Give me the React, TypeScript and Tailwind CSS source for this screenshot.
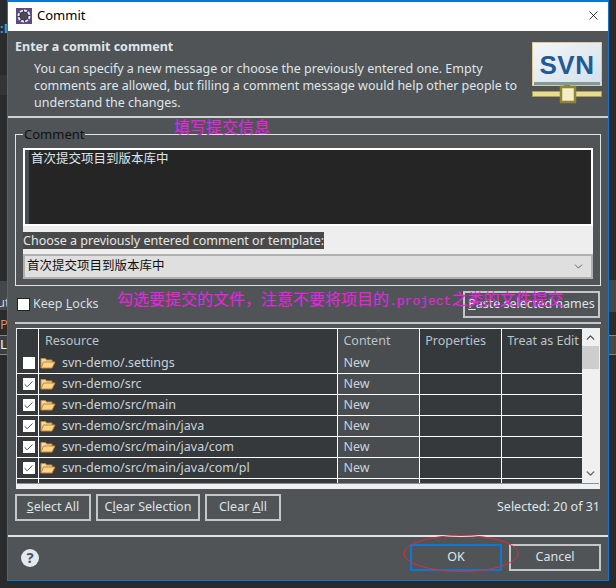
import { Check, ChevronDown, ChevronUp, X } from "lucide-react";

const rows = [
  { path: "svn-demo/.settings", checked: false },
  { path: "svn-demo/src", checked: true },
  { path: "svn-demo/src/main", checked: true },
  { path: "svn-demo/src/main/java", checked: true },
  { path: "svn-demo/src/main/java/com", checked: true },
  { path: "svn-demo/src/main/java/com/pl", checked: true },
];

const font = "font-['Noto_Sans','Noto_Sans_CJK_SC',sans-serif]";

function FolderIcon() {
  return (
    <svg width="16" height="14" viewBox="0 0 16 14" className="shrink-0">
      <path d="M1 12V2.5h4.5l1 1.5H12v2" fill="#f3d9a4" stroke="#c08a3e" />
      <path d="M1 12l2.5-6H15l-3 6z" fill="#fbd58e" stroke="#c9842c" />
    </svg>
  );
}

function Checkbox({ checked }: { checked: boolean }) {
  return (
    <span className="flex h-[12px] w-[12px] shrink-0 items-center justify-center bg-white">
      {checked && <Check size={11} strokeWidth={2} className="text-[#444]" />}
    </span>
  );
}

function ActionButton({ children, className = "" }: { children: React.ReactNode; className?: string }) {
  return (
    <button className={`flex h-[27px] items-center justify-center border-2 border-[#c4c6c7] bg-[#505457] text-[12.5px] text-[#dce3e8] ${className}`}>
      {children}
    </button>
  );
}

function Row({ path, checked }: { path: string; checked: boolean }) {
  return (
    <div className="flex h-[21px] border-b border-white bg-[#36393c] text-[12.5px] text-[#c8d3da]">
      <div className="flex w-[21px] items-center justify-end pr-[3px]">
        <Checkbox checked={checked} />
      </div>
      <div className="flex w-[300px] items-center border-l border-white pl-[1px]">
        <FolderIcon />
        <span className="ml-[6px] pt-[1px] leading-none">{path}</span>
      </div>
      <div className="flex w-[82px] items-center border-l border-white bg-[#494d50] pl-[5px] pt-[1px]">New</div>
      <div className="w-[82px] border-l border-white" />
      <div className="w-[81px] border-l border-white" />
    </div>
  );
}

export default function App() {
  return (
    <div className={`relative flex h-[588px] w-[616px] overflow-hidden bg-[#2a2b2c] ${font}`}>
      {/* bits of the IDE behind the dialog */}
      <div className="relative w-[7px] shrink-0 overflow-hidden">
        <span className="absolute left-0 top-[18px] text-[13px] font-bold leading-[20px] text-[#2f9fd8]">:D</span>
        <div className="absolute left-0 top-[75px] h-[20px] w-[7px] bg-[#333537]" />
        <div className="absolute left-0 top-[281px] h-[29px] w-[7px] bg-[#45484a]" />
        <div className="absolute left-0 top-[335px] h-[20px] w-[7px] border-y border-[#8a8670] bg-[#3c3f41]" />
        <span className="absolute left-[-3px] top-[293px] text-[13px] leading-[18px] text-[#c8d3da]">ut</span>
        <span className="absolute left-0 top-[315px] text-[13px] leading-[18px] text-[#d9905a]">P</span>
        <span className="absolute left-0 top-[336px] text-[13px] leading-[17px] text-white">L</span>
      </div>

      <div className="flex h-[581px] w-[602px] shrink-0 flex-col border border-t-2 border-[#0a78d0] bg-[#505457]">
        <div className="flex h-[29px] shrink-0 items-center justify-between bg-white px-[8px] pb-[2px]">
          <div className="flex items-center gap-[5px]">
            <svg width="16" height="16" viewBox="0 0 16 16">
              <rect width="16" height="16" fill="#5d4a86" />
              <circle cx="8" cy="8" r="5.5" fill="#34343f" stroke="#e8e8e8" strokeWidth="2" strokeDasharray="3 1.2" />
              <circle cx="8" cy="8" r="3.5" fill="#4a4a5c" />
            </svg>
            <span className="text-[13px] text-black">Commit</span>
          </div>
          <X size={15} strokeWidth={1.25} className="mr-[-1px] text-black" />
        </div>

        <div className="flex h-[87px] shrink-0 justify-between border-b-2 border-[#d0d2d3] pl-[7px] pr-[6px] pt-[7px]">
          <div className="text-[#dfe6ea]">
            <div className="text-[12.5px] font-bold leading-[18px]">Enter a commit comment</div>
            <p className="ml-[19px] mt-[4px] w-[486px] text-[12.5px] leading-[17px]">
              You can specify a new message or choose the previously entered one. Empty comments are allowed, but filling a comment message would help other people to understand the changes.
            </p>
          </div>
          <svg width="70" height="62" viewBox="0 0 70 62" className="mt-[4px] shrink-0">
            <defs>
              <linearGradient id="svnBg" x1="0" y1="0" x2="1" y2="1">
                <stop offset="0" stopColor="#f3f6f8" />
                <stop offset="1" stopColor="#d2e0ea" />
              </linearGradient>
            </defs>
            <rect x="0.5" y="0.5" width="69" height="43" fill="url(#svnBg)" stroke="#e3c796" />
            <rect x="2" y="40" width="66" height="3" fill="#7d9a9c" />
            <text x="35" y="32" textAnchor="middle" fontFamily="Liberation Sans" fontWeight="700" fontSize="26" letterSpacing="0.5" fill="#225a96">SVN</text>
            <rect x="32" y="43" width="6" height="4" fill="#8c8440" />
            <rect x="0.5" y="49.5" width="69" height="5" fill="#e8dc8e" stroke="#a89f55" strokeWidth="1" />
            <rect x="29" y="45" width="14" height="15" fill="#f6ecc4" stroke="#8d8438" strokeWidth="2.5" />
          </svg>
        </div>

        <div className="relative mx-[7px] mt-[16px] h-[152px] shrink-0 border border-[#e0e2e3] px-[7px] pt-[13px]">
          <span className="absolute left-[7px] top-[-9px] bg-[#505457] px-[1px] text-[13px] leading-[16px] text-[#111]">Comment</span>
          <div className="flex h-[78px] border-2 border-white bg-[#252525] text-[12.5px] leading-[18px] text-[#dfe6ea]">
            <div className="h-full w-[4px] bg-[#4a4d50]" />
            <span className="pl-[2px]">首次提交项目到版本库中</span>
          </div>
          <div className="flex h-[28px] items-center bg-[#eeeeee] text-[12.5px]">
            <span className="bg-[#494949] leading-[17px] text-[#e6e6e6]">Choose a previously entered comment or template:</span>
          </div>
          <div className="flex h-[25px] items-center justify-between border-2 border-[#b0b0b0] bg-[#dfdfdf] pl-[2px] pr-[6px] text-[12.5px] text-[#111]">
            <span>首次提交项目到版本库中</span>
            <ChevronDown size={13} strokeWidth={1.5} className="text-[#444]" />
          </div>
        </div>

        <div className="flex h-[32px] shrink-0 items-end justify-between pl-[9px] pr-[8px]">
          <div className="mb-[4px] flex items-center gap-[3px] text-[12.5px] text-[#d5dfe6]">
            <span className="h-[13px] w-[13px] border border-[#222] bg-white" />
            <span>
              Keep <span className="underline">L</span>ocks
            </span>
          </div>
          <ActionButton className="w-[137px]">
            <span>
              <span className="underline">P</span>aste selected names
            </span>
          </ActionButton>
        </div>

        <div className="mx-[7px] mt-[4px] h-[2px] shrink-0 bg-[#c4c6c7]" />

        <div className="mx-[8px] mt-[4px] flex h-[161px] shrink-0 flex-col border-x border-[#f0f0f0]">
          <div className="flex min-h-0 flex-1">
            <div className="min-w-0 flex-1 overflow-hidden border-t border-white bg-[#36393c]">
              <div className="flex h-[24px] text-[12.5px] text-[#b9c4cb]">
                <div className="w-[21px]" />
                <div className="flex w-[300px] items-center border-l border-white pl-[6px]">Resource</div>
                <div className="relative flex w-[82px] items-center border-l border-white bg-[#494d50] pl-[5px]">
                  Content
                  <ChevronUp size={11} strokeWidth={1} className="absolute left-[35px] top-[-3px] text-[#6f7376]" />
                </div>
                <div className="flex w-[82px] items-center border-l border-white pl-[5px]">Properties</div>
                <div className="flex w-[81px] items-center overflow-hidden whitespace-nowrap border-l border-white pl-[5px]">Treat as Edit</div>
              </div>
              {rows.map((row) => (
                <Row key={row.path} {...row} />
              ))}
              <div className="flex h-[4px]">
                <div className="w-[21px]" />
                <div className="w-[300px] border-l border-white" />
                <div className="w-[82px] border-l border-white bg-[#494d50]" />
                <div className="w-[82px] border-l border-white" />
                <div className="w-[81px] border-l border-white" />
              </div>
            </div>
            <div className="flex w-[17px] shrink-0 flex-col items-center justify-between bg-[#f0f0f0] py-[3px]">
              <div className="flex w-full flex-col items-center">
                <ChevronUp size={13} strokeWidth={2.5} className="text-[#505050]" />
                <div className="mt-[2px] h-[23px] w-full bg-[#cdcdcd]" />
              </div>
              <ChevronDown size={13} strokeWidth={2.5} className="text-[#606060]" />
            </div>
          </div>
          <div className="h-[6px] shrink-0 border-t border-[#8b8e90] bg-[#f0f0f0]" />
        </div>

        <div className="mx-[7px] mt-[5px] flex h-[27px] shrink-0 items-center justify-between pr-[1px]">
          <div className="flex gap-[5px]">
            <ActionButton className="w-[76px]">
              <span>
                <span className="underline">S</span>elect All
              </span>
            </ActionButton>
            <ActionButton className="w-[104px]">
              <span>
                C<span className="underline">l</span>ear Selection
              </span>
            </ActionButton>
            <ActionButton className="w-[76px]">
              <span>
                Clear <span className="underline">A</span>ll
              </span>
            </ActionButton>
          </div>
          <span className="text-[12.5px] text-[#dfe6ea]">Selected: 20 of 31</span>
        </div>

        <div className="mt-[14px] h-[2px] shrink-0 bg-[#e3e4e5]" />

        <div className="flex flex-1 items-center justify-between pb-[2px] pl-[13px] pr-[7px]">
          <span className="flex h-[18px] w-[18px] items-center justify-center rounded-full bg-[#e4e9ef] text-[15px] font-bold leading-none text-[#47556b]">?</span>
          <div className="flex gap-[7px]">
            <button className="h-[27px] w-[92px] border-2 border-[#0a78d7] bg-[#505457] text-[12.5px] text-[#dfe6ea]">OK</button>
            <ActionButton className="w-[92px]">Cancel</ActionButton>
          </div>
        </div>
      </div>

      {/* strip of the IDE on the right */}
      <div className="relative flex-1">
        <div className="absolute inset-x-0 top-[280px] h-[32px] bg-[#45484a]" />
        <div className="absolute inset-x-0 top-[335px] h-[20px] border-y border-[#8a8670] bg-[#4a4844]" />
      </div>

      {/* hand-written annotations on top of the screenshot */}
      <span className="absolute left-[174px] top-[116px] font-['Noto_Sans_CJK_SC',sans-serif] text-[16px] leading-[20px] text-[#f01ee6]">填写提交信息</span>
      <span className="absolute left-[117px] top-[288px] whitespace-nowrap font-['Noto_Sans_CJK_SC',sans-serif] text-[16px] leading-[20px] text-[#f01ee6]">
        勾选要提交的文件，注意不要将项目的<span className="font-['Liberation_Mono',monospace] text-[13px]">.project</span>之类的文件提交
      </span>
      <svg width="116" height="40" viewBox="0 0 116 40" className="absolute left-[403px] top-[534px]">
        <ellipse cx="58" cy="19.5" rx="57" ry="18" fill="none" stroke="#d9303a" strokeWidth="1" />
      </svg>
    </div>
  );
}
